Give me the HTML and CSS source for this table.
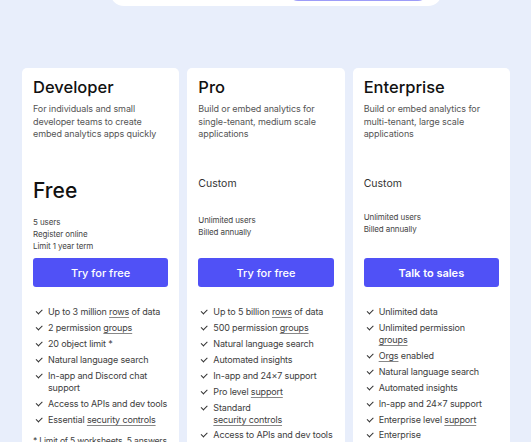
FILE: index.html
```html
<!DOCTYPE html>
<html>
<head>
  <title>Pricing</title>
  <link rel="stylesheet" href="styles.css">
</head>
<body>

<div class="toggle">
  <div class="toggle-on"></div>
</div>

<div class="plans">

  <div class="plan">
    <div class="summary">
      <h3>Developer</h3>
      <p class="desc">For individuals and small developer teams to create embed analytics apps quickly</p>
      <div class="price price-free">Free</div>
      <div class="meta meta-free">5 users<br>Register online<br>Limit 1 year term</div>
    </div>
    <button class="cta">Try for free</button>
    <ul class="features">
      <li>Up to 3 million <u>rows</u> of data</li>
      <li>2 permission <u>groups</u></li>
      <li>20 object limit *</li>
      <li>Natural language search</li>
      <li>In-app and Discord chat support</li>
      <li>Access to APIs and dev tools</li>
      <li>Essential <u>security controls</u></li>
    </ul>
    <p class="note">* Limit of 5 worksheets, 5 answers</p>
  </div>

  <div class="plan">
    <div class="summary">
      <h3>Pro</h3>
      <p class="desc">Build or embed analytics for single-tenant, medium scale applications</p>
      <div class="price">Custom</div>
      <div class="meta">Unlimited users<br>Billed annually</div>
    </div>
    <button class="cta">Try for free</button>
    <ul class="features">
      <li>Up to 5 billion <u>rows</u> of data</li>
      <li>500 permission <u>groups</u></li>
      <li>Natural language search</li>
      <li>Automated insights</li>
      <li>In-app and 24×7 support</li>
      <li>Pro level <u>support</u></li>
      <li>Standard<br><u>security controls</u></li>
      <li>Access to APIs and dev tools</li>
    </ul>
  </div>

  <div class="plan">
    <div class="summary">
      <h3>Enterprise</h3>
      <p class="desc">Build or embed analytics for multi-tenant, large scale applications</p>
      <div class="price">Custom</div>
      <div class="meta meta-ent">Unlimited users<br>Billed annually</div>
    </div>
    <button class="cta cta-bold">Talk to sales</button>
    <ul class="features">
      <li>Unlimited data</li>
      <li>Unlimited permission<br><u>groups</u></li>
      <li><u>Orgs</u> enabled</li>
      <li>Natural language search</li>
      <li>Automated insights</li>
      <li>In-app and 24×7 support</li>
      <li>Enterprise level <u>support</u></li>
      <li>Enterprise<br><u>security controls</u></li>
    </ul>
  </div>

</div>

</body>
</html>
```

FILE: styles.css
```css
body {
  margin: 0;
  background: #e8eefb;
  font-family: Inter, "Liberation Sans", sans-serif;
  color: #222;
  overflow: hidden;
}
.toggle {
  width: 332px;
  height: 40px;
  margin: -34px 0 0 110px;
  background: #fff;
  border-radius: 0 0 14px 14px;
  display: flex;
  justify-content: flex-end;
  align-items: flex-end;
  padding: 0 14px 5px 0;
  box-sizing: border-box;
}
.toggle-on {
  width: 140px;
  height: 20px;
  background: #9d9cf8;
  border-radius: 0 0 10px 10px;
}
.plans {
  display: grid;
  grid-template-columns: repeat(3, 1fr);
  gap: 8px;
  width: 488px;
  margin: 62px 0 0 22px;
}
.plan {
  background: #fff;
  border-radius: 5px;
  padding: 8px 11px 20px;
  height: 420px;
}
.summary {
  height: 182px;
}
h3 {
  margin: 0;
  font-size: 16.5px;
  line-height: 22px;
  font-weight: 500;
  color: #111;
}
.desc {
  margin: 5px 0 0;
  font-size: 9px;
  line-height: 12.5px;
  letter-spacing: -0.1px;
  color: #555;
}
.price {
  margin-top: 36px;
  font-size: 10.5px;
  line-height: 14px;
  color: #333;
}
.price-free {
  margin-top: 37px;
  font-size: 21px;
  line-height: 26px;
  font-weight: 500;
  color: #111;
}
.meta {
  margin-top: 23px;
  font-size: 8px;
  line-height: 12px;
  letter-spacing: -0.1px;
  color: #444;
}
.meta-free {
  margin-top: 12px;
}
.meta-ent {
  margin-top: 20px;
}
.cta {
  display: block;
  width: 100%;
  height: 29px;
  border: none;
  border-radius: 3px;
  background: #5051f6;
  color: #fff;
  font-family: inherit;
  font-size: 11px;
  font-weight: 500;
}
.cta-bold {
  font-weight: 600;
}
.features {
  list-style: none;
  margin: 19px 0 0;
  padding: 0 0 0 2px;
  display: flex;
  flex-direction: column;
  gap: 4.4px;
}
.features li {
  position: relative;
  padding-left: 13px;
  font-size: 9px;
  line-height: 11.6px;
  letter-spacing: -0.15px;
  color: #3d3d3d;
}
.features li::before {
  content: "";
  position: absolute;
  left: 1px;
  top: 3px;
  width: 5px;
  height: 2.5px;
  border-left: 1.2px solid #333;
  border-bottom: 1.2px solid #333;
  transform: rotate(-45deg);
}
.features u {
  text-decoration-color: #888;
  text-underline-offset: 2px;
}
.note {
  margin: 11px 0 0;
  font-size: 8.6px;
  letter-spacing: -0.2px;
  white-space: nowrap;
  color: #444;
}
```
